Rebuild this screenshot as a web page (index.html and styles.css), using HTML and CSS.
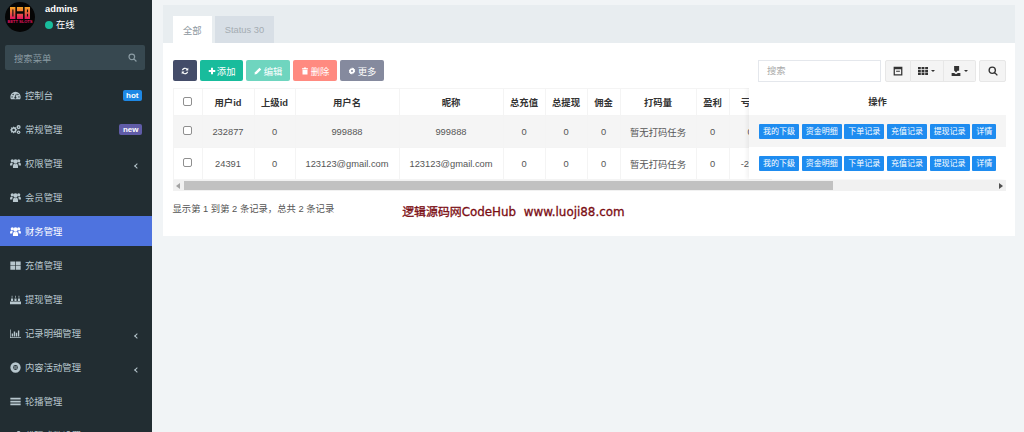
FILE: index.html
```html
<!DOCTYPE html>
<html lang="zh-CN">
<head>
    <meta charset="UTF-8">
    <title>财务管理</title>
    <link rel="stylesheet" href="styles.css">
</head>
<body>
<svg class="defs" width="0" height="0">
    <defs>
        <symbol id="i-dash" viewBox="0 0 16 16"><path d="M8 2.500A7.500 7.500 0 0 0 .5 10c0 1.300.3 2.400.9 3.500h13.200c.6-1.100.9-2.200.9-3.500A7.500 7.500 0 0 0 8 2.500zM3 11a1 1 0 1 1 0-2 1 1 0 0 1 0 2zm1.500-3.500a1 1 0 1 1 0-2 1 1 0 0 1 0 2zm5 3.500a1.600 1.600 0 1 1-2.500-1.300l1.800-4.200.9.400-1.500 4.200c.9.100 1.300.3 1.300.9zM13 11a1 1 0 1 1 0-2 1 1 0 0 1 0 2zm-1.500-3.500a1 1 0 1 1 0-2 1 1 0 0 1 0 2z"/></symbol>
        <symbol id="i-cogs" viewBox="0 0 16 16"><path fill-rule="evenodd" d="M6 4.500l1.500.5 1-.6.9.9-.6 1.100.4 1.100 1.300.3v1.400l-1.300.3-.4 1.100.6 1.100-.9.9-1.100-.6-1.100.4-.3 1.200H4.600l-.3-1.200-1.100-.4-1.100.6-.9-.9.6-1.100-.4-1.100L.2 9.500V8.100l1.200-.3.4-1.100-.6-1.100.9-.9 1.100.6 1.100-.4.3-1.200zM5.300 7a1.800 1.800 0 1 0 0 3.600 1.800 1.800 0 0 0 0-3.600z"/><circle cx="12.500" cy="4.500" r="3"/><circle cx="12.500" cy="12" r="2.500"/><circle cx="12.500" cy="4.500" r="1" fill="#222d32"/><circle cx="12.500" cy="12" r=".9" fill="#222d32"/></symbol>
        <symbol id="i-group" viewBox="0 0 16 16"><circle cx="3.300" cy="4" r="2.300"/><circle cx="12.700" cy="4" r="2.300"/><circle cx="8" cy="5" r="3.200"/><path d="M0 11c0-3 .7-4.500 2.500-4.500.5 0 1 .3 1.500.6-.4.900-.6 2.200-.6 3.900H0zM16 11c0-3-.7-4.500-2.500-4.500-.5 0-1 .3-1.500.6.400.9.600 2.200.600 3.900H16zM4.300 14.500c-.3-3.500.6-6 2-6 .4.400 1 .7 1.700.7s1.300-.3 1.700-.7c1.400 0 2.300 2.500 2 6H4.300z"/></symbol>
        <symbol id="i-th" viewBox="0 0 16 16"><path d="M.5 2h7v5.500h-7zM8.500 2h7v5.500h-7zM.5 8.500h7V14h-7zM8.500 8.500h7V14h-7z"/></symbol>
        <symbol id="i-cake" viewBox="0 0 16 16"><path d="M0 11h16v4H0zM1.500 6.500h3V10h-3zM6.500 6.500h3V10h-3zM11.500 6.500h3V10h-3zM2.500 2.500h1v3h-1zM7.500 2.500h1v3h-1zM12.500 2.500h1v3h-1z"/></symbol>
        <symbol id="i-chart" viewBox="0 0 16 16"><path d="M0 2h1v11.500h15v1H0zM2.500 8h2v4.500h-2zM5.500 5h2v7.500h-2zM8.500 7h2v5.500h-2zM11.500 3.500h2v9h-2z"/></symbol>
        <symbol id="i-globe" viewBox="0 0 16 16"><path fill-rule="evenodd" d="M8 .5a7.500 7.500 0 1 1 0 15A7.500 7.500 0 0 1 8 .5zM8 4.500a3.500 3.500 0 1 0 0 7 3.500 3.500 0 0 0 0-7z"/><path d="M5.500 6.500h5v1h-5zM5.500 8.500h5v1h-5z"/></symbol>
        <symbol id="i-bars" viewBox="0 0 16 16"><path d="M.5 2.500h15v2.500H.5zM.5 6.800h15v2.500H.5zM.5 11h15v2.500H.5z"/></symbol>
        <symbol id="i-search" viewBox="0 0 16 16"><path fill="none" stroke="currentColor" stroke-width="2.200" d="M6.800 1.800a5 5 0 1 1 0 10 5 5 0 0 1 0-10zM10.500 10.500L15 15"/></symbol>
    </defs>
</svg>

<div class="layout">
    <aside class="sidebar">
        <div class="user-panel">
            <div class="avatar">
                <svg width="20" height="12" viewBox="0 0 26 14" preserveAspectRatio="none">
                    <defs>
                        <linearGradient id="logo-grad" x1="0" y1="0" x2="0" y2="1">
                            <stop offset="0" stop-color="#f5a623"/>
                            <stop offset="1" stop-color="#e0115f"/>
                        </linearGradient>
                    </defs>
                    <path fill="url(#logo-grad)" d="M0 0h7v14H0zM9 0h8v5H9zM9 8h8v6H9zM19 0h7v14h-7z"/>
                    <path fill="#111" d="M3 3h1.500v8H3zM22 3h1.500v3H22zM22 8h1.500v3H22z"/>
                </svg>
                <span class="avatar-text">BETT SLOTS</span>
            </div>
            <div class="user-info">
                <div class="user-name">admins</div>
                <div class="user-status"><span class="status-dot"></span>在线</div>
            </div>
        </div>
        <div class="side-search">
            <span>搜索菜单</span>
            <svg class="icon"><use href="#i-search"/></svg>
        </div>
        <ul class="menu">
            <li class="menu-item"><svg class="icon"><use href="#i-dash"/></svg><span class="menu-label">控制台</span><span class="tag tag-hot">hot</span></li>
            <li class="menu-item"><svg class="icon"><use href="#i-cogs"/></svg><span class="menu-label">常规管理</span><span class="tag tag-new">new</span></li>
            <li class="menu-item"><svg class="icon"><use href="#i-group"/></svg><span class="menu-label">权限管理</span><span class="chevron"></span></li>
            <li class="menu-item"><svg class="icon"><use href="#i-group"/></svg><span class="menu-label">会员管理</span></li>
            <li class="menu-item active"><svg class="icon"><use href="#i-group"/></svg><span class="menu-label">财务管理</span></li>
            <li class="menu-item"><svg class="icon"><use href="#i-th"/></svg><span class="menu-label">充值管理</span></li>
            <li class="menu-item"><svg class="icon"><use href="#i-cake"/></svg><span class="menu-label">提现管理</span></li>
            <li class="menu-item"><svg class="icon"><use href="#i-chart"/></svg><span class="menu-label">记录明细管理</span><span class="chevron"></span></li>
            <li class="menu-item"><svg class="icon"><use href="#i-globe"/></svg><span class="menu-label">内容活动管理</span><span class="chevron"></span></li>
            <li class="menu-item"><svg class="icon"><use href="#i-bars"/></svg><span class="menu-label">轮播管理</span></li>
            <li class="menu-item"><svg class="icon"><use href="#i-cogs"/></svg><span class="menu-label">代理成数设置</span></li>
        </ul>
    </aside>

    <main class="content">
        <section class="panel">
            <div class="tabs">
                <a class="tab active">全部</a>
                <a class="tab">Status 30</a>
            </div>
            <div class="panel-body">
                <div class="toolbar">
                    <button class="btn btn-dark"><svg class="btn-icon" viewBox="0 0 16 16"><path d="M14.500 1.500v5.500H9l2-2a4 4 0 0 0-6.800 1.500H1.500A6.500 6.500 0 0 1 12.600 3.400zM1.500 14.500V9H7l-2 2a4 4 0 0 0 6.800-1.500h2.700A6.500 6.500 0 0 1 3.400 12.600z"/></svg></button>
                    <button class="btn btn-green"><svg class="btn-icon" viewBox="0 0 16 16"><path d="M6 1.500h4V6h4.500v4H10v4.500H6V10H1.500V6H6z"/></svg>添加</button>
                    <button class="btn btn-teal"><svg class="btn-icon" viewBox="0 0 16 16"><path d="M11 1.500l3.500 3.500-9 9L1 15l1-4.500z"/></svg>编辑</button>
                    <button class="btn btn-red"><svg class="btn-icon" viewBox="0 0 16 16"><path d="M6 1h4l.6 1.500H14v1.800H2V2.500h3.400zM3 5.500h10V15H3z"/></svg>删除</button>
                    <button class="btn btn-gray"><svg class="btn-icon" viewBox="0 0 16 16"><path fill-rule="evenodd" d="M8 .5l1.300 1.900 2.300-.5.500 2.300 2.200.8-.7 2.500.7 2.500-2.200.8-.5 2.300-2.300-.5L8 15.500l-1.300-1.900-2.300.5-.5-2.300-2.200-.8.700-2.500-.7-2.500 2.200-.8.500-2.300 2.300.5zM8 6a2 2 0 1 0 0 4 2 2 0 0 0 0-4z"/></svg>更多</button>
                    <div class="toolbar-right">
                        <div class="table-search">搜索</div>
                        <div class="btn-group">
                            <button class="tool-btn"><svg class="tool-icon" viewBox="0 0 16 16"><path fill-rule="evenodd" d="M1 1h14v14H1zM3 5v8h10V5zM5 7.500h6v1.500H5z"/></svg></button>
                            <button class="tool-btn"><svg class="tool-icon" viewBox="0 0 16 16"><path d="M0 1.500h4.500v3.700H0zM5.700 1.500h4.600v3.700H5.700zM11.500 1.500H16v3.700h-4.500zM0 6.200h4.500v3.600H0zM5.700 6.200h4.600v3.600H5.700zM11.500 6.200H16v3.600h-4.500zM0 10.800h4.500v3.700H0zM5.700 10.800h4.600v3.700H5.700zM11.500 10.800H16v3.700h-4.500z"/></svg><span class="caret"></span></button>
                            <button class="tool-btn"><svg class="tool-icon" viewBox="0 0 16 16"><path d="M5 0h8v7.500h-2.500L8 10.500 5.500 7.500H5zM1 11h4l3 2 3-2h4v5H1z"/></svg><span class="caret"></span></button>
                        </div>
                        <button class="tool-btn tool-single"><svg class="tool-icon" viewBox="0 0 16 16"><use href="#i-search"/></svg></button>
                    </div>
                </div>

                <div class="table-box">
                    <table class="data-table">
                        <colgroup>
                            <col class="c-check"><col class="c-id"><col class="c-parent"><col class="c-name"><col class="c-name">
                            <col class="c-money"><col class="c-money"><col class="c-fee"><col class="c-code"><col class="c-fee"><col class="c-money">
                        </colgroup>
                        <thead>
                            <tr><th><input type="checkbox"></th><th>用户id</th><th>上级id</th><th>用户名</th><th>昵称</th><th>总充值</th><th>总提现</th><th>佣金</th><th>打码量</th><th>盈利</th><th>亏损</th></tr>
                        </thead>
                        <tbody>
                            <tr class="row-first"><td><input type="checkbox"></td><td>232877</td><td>0</td><td>999888</td><td>999888</td><td>0</td><td>0</td><td>0</td><td>暂无打码任务</td><td>0</td><td>0</td></tr>
                            <tr><td><input type="checkbox"></td><td>24391</td><td>0</td><td>123123@gmail.com</td><td>123123@gmail.com</td><td>0</td><td>0</td><td>0</td><td>暂无打码任务</td><td>0</td><td>-200</td></tr>
                        </tbody>
                    </table>
                    <div class="fixed-col">
                        <div class="fixed-head">操作</div>
                        <div class="fixed-row row-first">
                            <a class="op-btn">我的下级</a><a class="op-btn">资金明细</a><a class="op-btn">下单记录</a><a class="op-btn">充值记录</a><a class="op-btn">提现记录</a><a class="op-btn">详情</a>
                        </div>
                        <div class="fixed-row">
                            <a class="op-btn">我的下级</a><a class="op-btn">资金明细</a><a class="op-btn">下单记录</a><a class="op-btn">充值记录</a><a class="op-btn">提现记录</a><a class="op-btn">详情</a>
                        </div>
                    </div>
                </div>
                <div class="scrollbar">
                    <span class="arrow arrow-left"></span>
                    <div class="scroll-thumb"></div>
                    <span class="arrow arrow-right"></span>
                </div>

                <div class="pagination">
                    <span>显示第 1 到第 2 条记录，总共 2 条记录</span>
                    <span class="watermark">逻辑源码网CodeHub&nbsp; www.luoji88.com</span>
                </div>
            </div>
        </section>
    </main>
</div>
</body>
</html>
```

FILE: styles.css
```css
* {
    box-sizing: border-box;
}
html, body {
    height: 100%;
}
body {
    margin: 0;
    overflow: hidden;
    background-color: #f1f4f6;
    font-family: "Liberation Sans", Arial, "Noto Sans CJK SC", sans-serif;
    font-size: 9.33px;
    color: #444c54;
}
.defs {
    position: absolute;
}
.layout {
    display: flex;
    height: 432px;
}

/* sidebar */
.sidebar {
    width: 152px;
    flex-shrink: 0;
    overflow: hidden;
    background-color: #222d32;
    color: #b8c7ce;
}
.icon {
    width: 11px;
    height: 11px;
    fill: currentColor;
    flex-shrink: 0;
}
.user-panel {
    display: flex;
    height: 45px;
    padding: 2px 0 0 5px;
}
.avatar {
    width: 30px;
    height: 30px;
    border-radius: 50%;
    background-color: #050505;
    display: flex;
    flex-direction: column;
    align-items: center;
    padding-top: 5px;
}
.avatar-text {
    font-size: 4px;
    line-height: 5px;
    font-weight: bold;
    color: #e0115f;
    white-space: nowrap;
}
.user-info {
    margin-left: 10px;
    color: #fff;
}
.user-name {
    font-weight: bold;
    line-height: 14px;
}
.user-status {
    display: flex;
    align-items: center;
    line-height: 16px;
    margin-top: 1px;
}
.status-dot {
    width: 8px;
    height: 8px;
    border-radius: 50%;
    background-color: #18bc9c;
    margin-right: 3px;
}
.side-search {
    display: flex;
    align-items: center;
    justify-content: space-between;
    height: 25px;
    margin: 0 7px 0 5px;
    padding: 0 8px 0 9px;
    border-radius: 2px;
    background-color: #374850;
    color: #8a9ba3;
}
.side-search .icon {
    width: 9px;
    height: 9px;
}
.menu {
    list-style: none;
    margin: 10px 0 0;
    padding: 0;
}
.menu-item {
    display: flex;
    align-items: center;
    height: 30px;
    margin-bottom: 4px;
    padding: 0 10px 0 10px;
}
.menu-item .icon {
    margin-right: 4px;
}
.menu-label {
    flex-grow: 1;
    white-space: nowrap;
}
.menu-item.active {
    background-color: #4e73df;
    color: #fff;
}
.tag {
    font-size: 8px;
    font-weight: bold;
    line-height: 11px;
    padding: 0 3.5px;
    border-radius: 2px;
    color: #fff;
}
.tag-hot {
    background-color: #1e88e5;
}
.tag-new {
    background-color: #605ca8;
}
.chevron {
    width: 4px;
    height: 4px;
    margin: 5px 3px 0 0;
    border-left: 1px solid #b8c7ce;
    border-bottom: 1px solid #b8c7ce;
    transform: rotate(45deg);
}

/* main */
.content {
    flex-grow: 1;
    min-width: 0;
    padding: 5px 9px 0 11px;
}
.panel {
    background-color: #fff;
    height: 231px;
}
.tabs {
    display: flex;
    height: 38px;
    padding: 11px 0 0 10px;
    background-color: #e8edf0;
}
.tab {
    display: flex;
    align-items: center;
    justify-content: center;
    height: 27px;
    padding: 0 10px;
    margin-right: 3px;
    color: #a5adb3;
    background-color: #d8dfe6;
}
.tab.active {
    background-color: #fff;
    color: #8d979e;
}
.panel-body {
    padding: 17px 9px 0 9.5px;
}
.toolbar {
    display: flex;
    align-items: flex-start;
    height: 22px;
}
.btn {
    display: flex;
    align-items: center;
    height: 21px;
    padding: 0 8px;
    margin-right: 3px;
    border: 0;
    border-radius: 2px;
    font: inherit;
    color: #fff;
}
.btn .btn-icon {
    margin-right: 1.3px;
}
.btn-dark {
    width: 24px;
    padding: 0;
    justify-content: center;
    background-color: #444c69;
}
.btn-dark .btn-icon {
    margin-right: 0;
}
.btn-green {
    background-color: #18bc9c;
}
.btn-teal {
    background-color: #6fd5bf;
}
.btn-red {
    background-color: #ff8a80;
}
.btn-gray {
    background-color: #858a9e;
}
.btn-icon {
    width: 8px;
    height: 8px;
    fill: currentColor;
    flex-shrink: 0;
}
.tool-icon {
    width: 10px;
    height: 10px;
    fill: currentColor;
    flex-shrink: 0;
}
.toolbar-right {
    display: flex;
    align-items: center;
    margin-left: auto;
}
.table-search {
    width: 123px;
    height: 22px;
    line-height: 20px;
    padding: 0 8px;
    margin-right: 4px;
    border: 1px solid #e4e7ec;
    color: #a9a9a9;
}
.btn-group {
    display: flex;
}
.tool-btn {
    display: flex;
    align-items: center;
    justify-content: center;
    height: 22px;
    border: 1px solid #e7e7e7;
    background-color: #f4f4f4;
    color: #333;
    padding: 0;
    width: 26px;
}
.btn-group .tool-btn:first-child {
    border-radius: 2px 0 0 2px;
}
.btn-group .tool-btn + .tool-btn {
    width: 32.5px;
    border-left: 0;
}
.btn-group .tool-btn:last-child {
    border-radius: 0 2px 2px 0;
}
.tool-single {
    width: 27px;
    margin-left: 3px;
    border-radius: 2px;
}
.caret {
    width: 0;
    height: 0;
    margin-left: 3px;
    border-left: 2.5px solid transparent;
    border-right: 2.5px solid transparent;
    border-top: 2.5px solid #333;
}

/* table */
.table-box {
    position: relative;
    margin-top: 6px;
    height: 92px;
    overflow: hidden;
}
.data-table {
    width: 598px;
    table-layout: fixed;
    border-collapse: collapse;
    color: #555;
}
.c-check { width: 29px; }
.c-id { width: 52px; }
.c-parent { width: 41px; }
.c-name { width: 104px; }
.c-money { width: 42px; }
.c-fee { width: 33px; }
.c-code { width: 76px; }
.data-table th, .data-table td {
    border: 1px solid #f4f4f4;
    text-align: center;
    white-space: nowrap;
    overflow: hidden;
}
.data-table th {
    height: 27px;
    color: #333;
}
.data-table td {
    height: 32px;
}
.data-table input {
    appearance: none;
    display: block;
    width: 9px;
    height: 9px;
    margin: -2px auto 0;
    border: 1px solid #8f8f8f;
    border-radius: 2px;
    background-color: #fff;
}
.row-first {
    background-color: #f5f5f5;
}
.fixed-col {
    position: absolute;
    top: 0;
    right: 0;
    width: 257px;
    background-color: #fff;
    box-shadow: -2px 0 4px rgba(0, 0, 0, 0.06);
}
.fixed-head {
    height: 27px;
    line-height: 28px;
    text-align: center;
    font-weight: bold;
    color: #333;
}
.fixed-row {
    display: flex;
    align-items: center;
    gap: 2.67px;
    height: 32px;
    padding-left: 10px;
}
.op-btn {
    height: 15px;
    line-height: 15px;
    padding: 0 4px;
    font-size: 8px;
    color: #fff;
    background-color: #1e8cf0;
    border-radius: 1px;
    white-space: nowrap;
}
.scrollbar {
    display: flex;
    align-items: center;
    height: 11px;
    background-color: #f1f1f1;
}
.scroll-thumb {
    width: 649px;
    height: 9px;
    background-color: #c1c1c1;
    margin-left: 4px;
}
.arrow {
    width: 0;
    height: 0;
    border-top: 3px solid transparent;
    border-bottom: 3px solid transparent;
}
.arrow-left {
    margin-left: 3px;
    border-right: 4px solid #a3a3a3;
}
.arrow-right {
    margin-left: auto;
    margin-right: 3px;
    border-left: 4px solid #505050;
}
.pagination {
    display: flex;
    align-items: flex-start;
    margin-top: 11px;
    line-height: 14px;
    color: #555;
}
.watermark {
    margin: 3px 0 0 68px;
    font-family: "DejaVu Sans", "Noto Sans CJK SC", sans-serif;
    font-size: 11.9px;
    -webkit-text-stroke: 0.3px #7a0c12;
    color: #7a0c12;
}
```
